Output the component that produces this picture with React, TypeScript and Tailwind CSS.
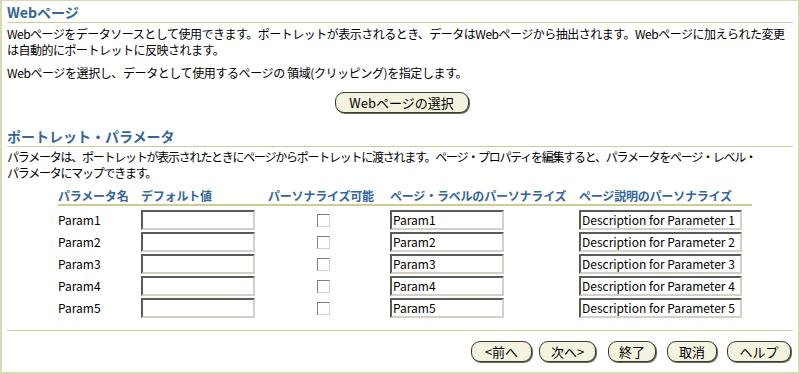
import React from "react";

const params = [1, 2, 3, 4, 5];

function PillButton({ label, className = "" }: { label: string; className?: string }) {
    return (
        <button
            className={`h-[21px] rounded-[9px] border border-[#3c3c30] bg-[#f4f3df] text-[13px] leading-[18px] text-black shadow-[1px_1px_0_#6b6b55] ${className}`}
        >
            {label}
        </button>
    );
}

function Field({ value = "", className = "" }: { value?: string; className?: string }) {
    return (
        <div
            className={`h-[20px] border-2 border-t-[#5a5a5a] border-l-[#5a5a5a] border-b-[#d4d0c8] border-r-[#d4d0c8] bg-white pl-[1px] text-[12px] leading-[16px] whitespace-nowrap overflow-hidden ${className}`}
        >
            {value}
        </div>
    );
}

export default function App() {
    return (
        <main
            className="w-[800px] h-[374px] overflow-hidden bg-white text-black border-t border-x-2 border-b-2 border-[#d6dab5] px-[5px] pt-[3px] text-[12px] leading-[16px]"
            style={{ fontFamily: '"Noto Sans CJK JP", "DejaVu Sans", sans-serif' }}
        >
            <h2 className="text-[14px] font-bold leading-[17px] text-[#336699] border-b border-[#cccc99] pb-[1px]">Webページ</h2>
            <p className="mt-[3px] whitespace-nowrap tracking-[-0.5px]">
                Webページをデータソースとして使用できます。ポートレットが表示されるとき、データはWebページから抽出されます。Webページに加えられた変更
                <br />
                は自動的にポートレットに反映されます。
            </p>
            <p className="mt-[7px] tracking-[-0.4px]">Webページを選択し、データとして使用するページの 領域(クリッピング)を指定します。</p>
            <div className="mt-[11px] flex justify-center pl-[3px]">
                <PillButton label="Webページの選択" className="w-[134px] h-[20px]" />
            </div>

            <h2 className="mt-[15px] text-[14px] font-bold leading-[17px] text-[#336699] border-b border-[#cccc99] pb-[1px]">ポートレット・パラメータ</h2>
            <p className="mt-[2px] whitespace-nowrap tracking-[-1.25px]">
                パラメータは、ポートレットが表示されたときにページからポートレットに渡されます。ページ・プロパティを編集すると、パラメータをページ・レベル・
                <br />
                パラメータにマップできます。
            </p>

            <div className="ml-[51px] mt-[7px] w-[694px]">
                <div className="grid grid-cols-[83px_127px_122px_189px_173px] border-b-2 border-[#cccc99] text-[12px] font-bold leading-[16px] tracking-[-0.2px] text-[#336699] whitespace-nowrap">
                    <div>パラメータ名</div>
                    <div>デフォルト値</div>
                    <div>パーソナライズ可能</div>
                    <div>ページ・ラベルのパーソナライズ</div>
                    <div>ページ説明のパーソナライズ</div>
                </div>
                <div className="mt-[4px] flex flex-col gap-[2px]">
                    {params.map((n) => (
                        <div key={n} className="grid grid-cols-[83px_127px_122px_189px_173px] items-center h-[20px]">
                            <div>Param{n}</div>
                            <Field className="w-[114px]" />
                            <div className="pl-[49px]">
                                <div className="w-[13px] h-[13px] border border-t-[#808080] border-l-[#808080] border-b-[#d4d0c8] border-r-[#d4d0c8] bg-white" />
                            </div>
                            <Field value={`Param${n}`} className="w-[114px]" />
                            <Field value={`Description for Parameter ${n}`} className="w-[163px]" />
                        </div>
                    ))}
                </div>
            </div>

            <div className="mt-[12px] border-t border-[#cccc99]" />
            <div className="mt-[10px] flex justify-end pr-[2px]">
                <PillButton label="<前へ" className="w-[61px]" />
                <PillButton label="次へ>" className="ml-[7px] w-[57px]" />
                <PillButton label="終了" className="ml-[12px] w-[48px]" />
                <PillButton label="取消" className="ml-[11px] w-[50px]" />
                <PillButton label="ヘルプ" className="ml-[10px] w-[64px]" />
            </div>
        </main>
    );
}
